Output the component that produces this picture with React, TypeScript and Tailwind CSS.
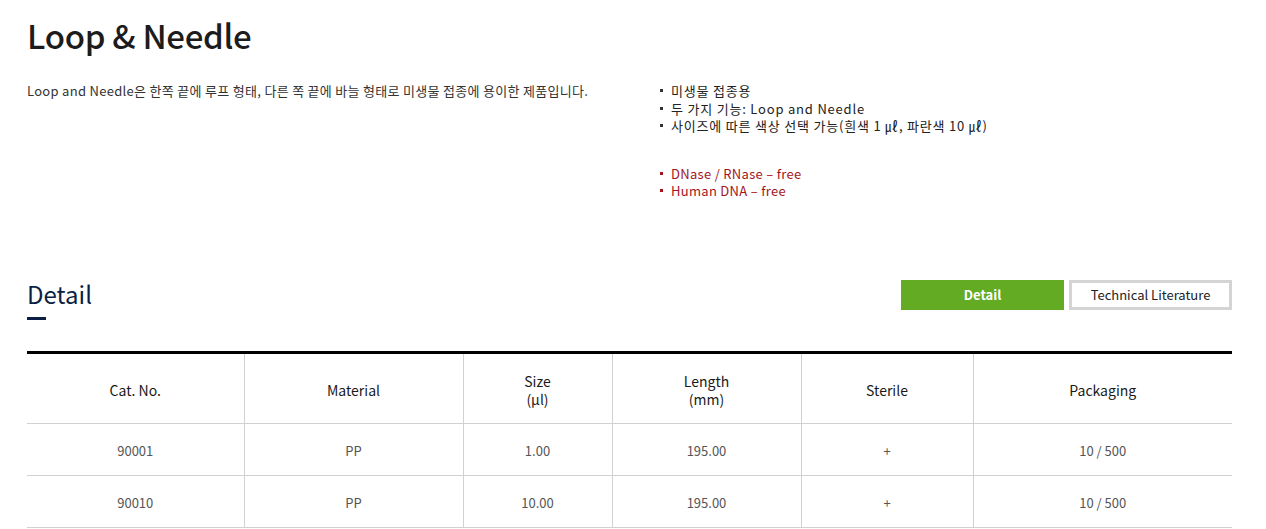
import React from "react";

const font = { fontFamily: '"Noto Sans", "Noto Sans CJK KR", sans-serif' };
const kr = { fontFamily: '"Noto Sans CJK KR", sans-serif' };

const cols = ["w-[217px]", "w-[219px]", "w-[149px]", "w-[189px]", "w-[172px]", "w-[259px]"];

const headers: React.ReactNode[] = [
  "Cat. No.",
  "Material",
  <>Size<br />(µl)</>,
  <>Length<br />(mm)</>,
  "Sterile",
  "Packaging",
];

const rows = [
  ["90001", "PP", "1.00", "195.00", "+", "10 / 500"],
  ["90010", "PP", "10.00", "195.00", "+", "10 / 500"],
];

function Bullet({ text, red }: { text: string; red?: boolean }) {
  return (
    <li className={`flex items-center h-[17.5px] ${red ? "text-[#a3141b]" : "text-[#222]"}`}>
      <span className={`w-[3px] h-[3px] mr-[8px] ${red ? "bg-[#a3141b]" : "bg-[#333]"}`} />
      <span>{text}</span>
    </li>
  );
}

export default function App() {
  return (
    <div className="bg-white w-[1266px] h-[529px] overflow-hidden" style={font}>
      <div className="ml-[27px] w-[1205px]">
        <h1 className="pt-[14px] text-[33px] leading-[42px] text-[#1c1c1c] tracking-[-0.3px]" style={{ ...kr, fontWeight: 500 }}>
          Loop &amp; Needle
        </h1>
        <div className="flex mt-[26px] h-[194px] text-[13px]" style={kr}>
          <p className="w-[633px] text-[#333] leading-[17px] tracking-[0.3px]">
            Loop and Needle은 한쪽 끝에 루프 형태, 다른 쪽 끝에 바늘 형태로 미생물 접종에 용이한 제품입니다.
          </p>
          <div className="tracking-[0.8px]">
            <ul>
              <Bullet text="미생물 접종용" />
              <Bullet text="두 가지 기능: Loop and Needle" />
              <Bullet text="사이즈에 따른 색상 선택 가능(흰색 1 ㎕, 파란색 10 ㎕)" />
            </ul>
            <ul className="mt-[30px] tracking-[0.3px]">
              <Bullet text="DNase / RNase – free" red />
              <Bullet text="Human DNA – free" red />
            </ul>
          </div>
        </div>
        <div className="flex items-start justify-between">
          <div>
            <h2 className="text-[24px] leading-[30px] text-[#0b1f44] mt-[3px]" style={{ ...kr, fontWeight: 400 }}>Detail</h2>
            <div className="w-[19px] h-[3px] bg-[#0b1f44] mt-[8px]" />
          </div>
          <div className="flex gap-[5px] mt-[4px]">
            <button className="w-[163px] h-[30px] bg-[#64ab24] text-white text-[13px] font-semibold" style={kr}>Detail</button>
            <button className="w-[163px] h-[30px] border-[3px] border-[#d4d4d4] bg-white text-[#222] text-[13px]" style={kr}>Technical Literature</button>
          </div>
        </div>
        <table className="mt-[31px] border-t-[3px] border-black border-collapse" style={kr}>
          <thead>
            <tr className="h-[71px] border-b border-[#d0d0d0]">
              {headers.map((h, i) => (
                <th key={i} className={`${cols[i]} p-0 pt-[3px] font-normal text-[14px] leading-[18px] text-[#1a1a1a] ${i > 0 ? "border-l border-[#d0d0d0]" : ""}`}>
                  {h}
                </th>
              ))}
            </tr>
          </thead>
          <tbody>
            {rows.map((r, ri) => (
              <tr key={ri} className="h-[52px] border-b border-[#d0d0d0]">
                {r.map((c, i) => (
                  <td key={i} className={`p-0 pt-[3px] text-center text-[13px] text-[#555] ${i > 0 ? "border-l border-[#d0d0d0]" : ""}`}>
                    {c}
                  </td>
                ))}
              </tr>
            ))}
          </tbody>
        </table>
      </div>
    </div>
  );
}
